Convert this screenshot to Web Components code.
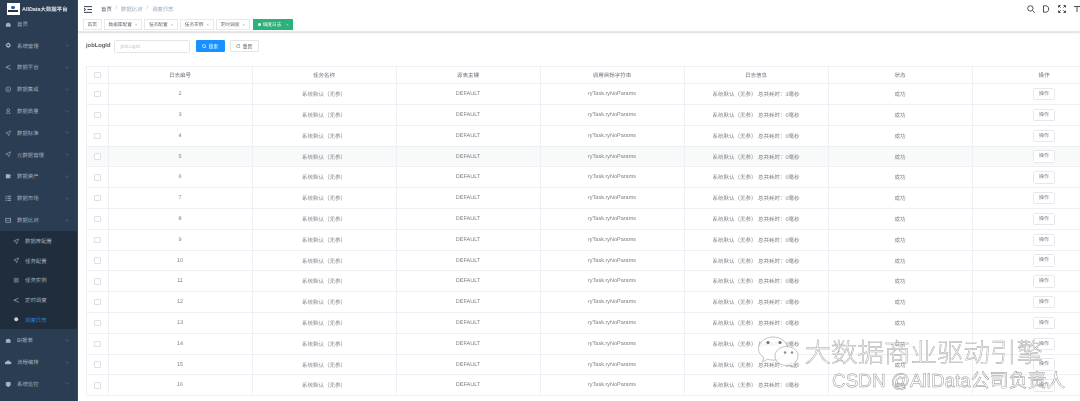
<!DOCTYPE html>
<html>
<head>
<meta charset="utf-8">
<style>
	html,body{margin:0; padding:0; width:1080px; height:401px; overflow:hidden; background:#fff;}
	body{font-family:"Liberation Sans","Noto Sans CJK SC",sans-serif; font-size:6px; color:#606266; text-rendering:geometricPrecision;}
	app-shell{filter:blur(.25px);}
</style>
</head>
<body>
<template id="shellTpl">
	<style>
		:host{display:flex; width:1080px; height:401px; overflow:hidden; position:relative;}
		main{flex:1; min-width:0; display:flex; flex-direction:column; overflow:hidden;}
	</style>
	<app-sidebar></app-sidebar>
	<main>
		<app-navbar></app-navbar>
		<tag-bar></tag-bar>
		<search-form></search-form>
		<log-table></log-table>
	</main>
	<water-mark></water-mark>
</template>

<template id="sidebarTpl">
	<style>
		:host{display:block; width:77.5px; flex:none; height:401px; background:#2b3d52; overflow:hidden; border-right:.5px solid #3a4b60; box-sizing:border-box;}
		.logo{position:relative; z-index:1; height:16px; display:flex; align-items:center; gap:2.5px; padding:1.5px 0 0 6.5px; box-sizing:border-box; margin-bottom:-3px;}
		.pic{width:13px; height:12.5px; background:#fff; display:flex; flex-direction:column; align-items:center; justify-content:center; gap:.4px;}
		.pic i{display:block; width:3.5px; height:3.5px; border-radius:50%; background:#2a5a9c;}
		.pic b{display:block; width:9.5px; height:1.7px; background:#27313e;}
		.name{color:#dfe4ea; font-size:5.4px; font-weight:600; white-space:nowrap;}
		.sub{background:#1f2d3d;}
	</style>
	<div class="logo"><div class="pic"><i></i><b></b></div><span class="name">AllData大数据平台</span></div>
	<side-item icon="dash" nochev>首页</side-item>
	<side-item icon="gear">系统管理</side-item>
	<side-item icon="tree">数据平台</side-item>
	<side-item icon="clock">数据集成</side-item>
	<side-item icon="user">数据质量</side-item>
	<side-item icon="send">数据标准</side-item>
	<side-item icon="send">元数据管理</side-item>
	<side-item icon="db">数据资产</side-item>
	<side-item icon="list">数据市场</side-item>
	<side-item icon="box" open>数据比对</side-item>
	<div class="sub">
		<sub-item icon="send">数据库配置</sub-item>
		<sub-item icon="send">任务配置</sub-item>
		<sub-item icon="grid">任务实例</sub-item>
		<sub-item icon="tree">定时调度</sub-item>
		<sub-item icon="dot" active>调度日志</sub-item>
	</div>
	<side-item icon="dash">BI报表</side-item>
	<side-item icon="cloud">流程编排</side-item>
	<side-item icon="shield">系统监控</side-item>
</template>

<template id="navbarTpl">
	<style>
		:host{display:flex; align-items:center; height:18.5px; flex:none; position:relative; color:#97a8be; font-size:5.4px;}
		.ham{margin-left:6px; width:8px; height:7px; flex:none;}
		nav{margin-left:9.5px; display:flex; gap:3.9px; white-space:nowrap;}
		nav b{font-weight:400; color:#4c5a6b;}
		nav s{text-decoration:none; color:#b5bfcb;}
		.tools{margin-left:auto; margin-right:-1px; display:flex; align-items:center; gap:7.5px; color:#5a5e66;}
		.tools svg{display:block; width:8px; height:8px;}
	</style>
	<svg class="ham" viewBox="0 0 8 7" fill="none" stroke="#3b4654" stroke-width="1"><path d="M0 .6h8M0 6.4h8M3.6 3.5H8M0 2l1.8 1.5L0 5z"/></svg>
	<nav><b>首页</b><s>/</s><span>数据比对</span><s>/</s><span>调度日志</span></nav>
	<div class="tools">
		<svg viewBox="0 0 8 8" fill="none" stroke="#4a4f57" stroke-width="1"><circle cx="3.4" cy="3.4" r="2.7"/><path d="M5.4 5.4 7.8 7.8"/></svg>
		<svg viewBox="0 0 8 8" fill="none" stroke="#4a4f57" stroke-width="1"><path d="M1.5 .8h2.2c2 0 3 1.4 3 3.2s-1 3.2-3 3.2H1.5z"/></svg>
		<svg viewBox="0 0 8 8" fill="none" stroke="#4a4f57" stroke-width="1"><path d="M.5 2.5V.5h2M5.5.5h2v2M7.5 5.500v2h-2M2.500 7.500h-2v-2M.8.8 2.600 2.600M7.200.8 5.400 2.600M7.200 7.200 5.400 5.400M.8 7.200 2.600 5.400"/></svg>
		<svg viewBox="0 0 8 8" fill="none" stroke="#4a4f57" stroke-width="1"><path d="M1 1.5h6M4 1.500V7"/></svg>
	</div>
</template>

<template id="tagbarTpl">
	<style>
		:host{display:flex; align-items:center; gap:2.2px; height:13px; flex:none; padding-left:5.3px; box-sizing:border-box; background:#fff; border-bottom:.5px solid #e4e7ec; box-shadow:0 1px 1.5px rgba(0,0,0,.14); position:relative; z-index:1;}
	</style>
	<tag-item>首页</tag-item>
	<tag-item closable>数据库配置</tag-item>
	<tag-item closable>任务配置</tag-item>
	<tag-item closable>任务实例</tag-item>
	<tag-item closable>定时调度</tag-item>
	<tag-item closable active>调度日志</tag-item>
</template>

<template id="formTpl">
	<style>
		:host{display:flex; align-items:center; height:13px; margin:8px 0 0 8.5px; flex:none; font-size:5.8px;}
		label{width:27.5px; font-weight:700; color:#5e6165; white-space:nowrap; flex:none;}
		.input{width:76px; height:13px; box-sizing:border-box; border:.5px solid #e3e5ea; border-radius:1.5px; color:#c0c4cc; font-size:5px; line-height:12px; padding-left:6px;}
		button{font:inherit; font-size:4.7px; height:11.5px; width:29px; box-sizing:border-box; border-radius:1px; border:.5px solid #e3e5ea; background:#fff; color:#606266; padding:0; display:flex; align-items:center; justify-content:center; gap:2.5px;}
		button svg{width:4.5px; height:4.5px;}
		.go{margin-left:6px; background:#1890ff; border-color:#1890ff; color:#fff;}
		.re{margin-left:5px;}
	</style>
	<label>jobLogId</label>
	<div class="input">jobLogId</div>
	<button class="go"><svg viewBox="0 0 6 6" fill="none" stroke="#fff" stroke-width=".8"><circle cx="2.7" cy="2.7" r="2.1"/><path d="M4.2 4.2 5.6 5.6"/></svg>搜索</button>
	<button class="re"><svg viewBox="0 0 6 6" fill="none" stroke="#606266" stroke-width=".7"><path d="M5.2 3A2.2 2.2 0 1 1 4.5 1.4M4.7.3v1.3H3.4"/></svg>重置</button>
</template>

<template id="tableTpl">
	<style>
		:host{display:block; margin:13.3px 0 0 8.5px; width:1029.5px; flex:none;}
		table{border-collapse:collapse; table-layout:fixed; width:1029.5px; font-size:5.5px; color:#7d8086;}
		th,td{border:1px solid #eef0f5; text-align:center; padding:0; font-weight:400; white-space:nowrap; overflow:hidden;}
		thead tr{height:17.5px;}
		th{color:#6f7277;}
		tbody tr{height:20.8px;}
		tbody tr.hover{background:#f8fafa;}
		i{display:block; width:6.5px; height:6.5px; margin:auto; box-sizing:border-box; border:.7px solid #dcdfe6; border-radius:1px; background:#fff;}
		.op{display:block; width:22.5px; height:12.5px; margin:auto; box-sizing:border-box; border:.7px solid #e6e8ed; border-radius:1.5px; line-height:11px; font-size:5px; color:#7d8086; background:#fff;}
	</style>
	<table>
		<colgroup><col style="width:21.5px"><col span="7" style="width:144px"></colgroup>
		<thead><tr>
			<th><i></i></th><th>日志编号</th><th>任务名称</th><th>源表主键</th><th>调用目标字符串</th><th>日志信息</th><th>状态</th><th>操作</th>
		</tr></thead>
		<tbody id="rows"></tbody>
	</table>
</template>

<template id="markTpl">
	<style>
		:host{display:block; position:absolute; left:758px; top:335px; width:322px; height:66px; pointer-events:none; font-family:"Noto Sans CJK SC","Liberation Sans",sans-serif;}
		svg{position:absolute; left:0; top:0; width:42px; height:38px;}
		.t1{position:absolute; left:46.5px; top:-2.5px; font-size:26.5px; line-height:36px; font-weight:300; color:rgba(255,255,255,.7); -webkit-text-stroke:.45px #a0a0a0; white-space:nowrap;}
		.t2{position:absolute; left:74px; top:33.5px; font-family:"Liberation Sans","Noto Sans CJK SC",sans-serif; font-size:18.9px; line-height:26px; color:rgba(255,255,255,.5); -webkit-text-stroke:.45px #8f8f8f; white-space:nowrap;}
	</style>
	<svg viewBox="0 0 42 38" fill="rgba(255,255,255,.82)" stroke="#b4b4b4" stroke-width=".8">
		<path d="M15 2C6.800 2 .5 7.200.5 13.500c0 3.700 2 6.800 5.200 8.900L4.500 27l5-2.700c1.700.5 3.500.8 5.500.8 8.200 0 14.500-5.200 14.500-11.600S23.200 2 15 2z"/>
		<path d="M40 21c0-5.300-5-9.500-11.500-9.500S17 15.700 17 21s5 9.500 11.500 9.500c1.400 0 2.700-.2 3.900-.5l4.600 2.400-1.200-3.900C38.200 26.700 40 24 40 21z"/>
		<circle cx="10" cy="7.500" r="1.500" fill="#6d6d6d" stroke="none"/><circle cx="22" cy="7.500" r="1.500" fill="#6d6d6d" stroke="none"/>
		<circle cx="27" cy="17.500" r="1.200" fill="#8a8a8a" stroke="none"/><circle cx="34" cy="17.500" r="1.200" fill="#8a8a8a" stroke="none"/>
	</svg>
	<div class="t1">大数据商业驱动引擎</div>
	<div class="t2">CSDN @AllData公司负责人</div>
</template>

<script>
	const ICONS = {
		dash:'<path d="M1 7V5a3 3 0 0 1 6 0v2z" fill="C"/>',
		gear:'<circle cx="4" cy="4" r="2" stroke="C" stroke-width="1.5" fill="none"/><path d="M4 .5v1M4 6.500v1M.5 4h1M6.500 4h1" stroke="C"/>',
		tree:'<path d="M1 4 6.500 1.500M1 4l3 1M4 5l3 1.500" stroke="C" stroke-width=".9" fill="none"/>',
		clock:'<circle cx="4" cy="4" r="3" stroke="C" stroke-width=".8" fill="none"/><path d="M2.500 4H5" stroke="C"/>',
		user:'<circle cx="4" cy="2.500" r="1.700" stroke="C" stroke-width=".8" fill="none"/><path d="M1 7.300h6M2 7c0-1.500.8-2.500 2-2.500S6 5.500 6 7" stroke="C" stroke-width=".7" fill="none"/>',
		send:'<path d="M7 1 1 3.500l2.500 1L4.500 7z" stroke="C" stroke-width=".7" fill="none"/>',
		db:'<path d="M1 1.500h5v5H1z" fill="C"/><path d="M6 3h1.500M6 5h1.500" stroke="C"/>',
		list:'<path d="M.5 1.500h1.500M.5 4h1.500M.5 6.500h1.500M3 1.500h4.500M3 4h4.500M3 6.500h4.500" stroke="C" stroke-width="1.1"/>',
		box:'<rect x="1" y="1.500" width="6" height="5" stroke="C" stroke-width=".8" fill="none"/><path d="M1 4h6" stroke="C" stroke-width=".6"/>',
		grid:'<path d="M1.500 1.500h2v2h-2zM4.500 1.500h2v2h-2zM1.500 4.500h2v2h-2zM4.500 4.500h2v2h-2z" stroke="C" stroke-width=".6" fill="none"/>',
		dot:'<circle cx="4" cy="4" r="2.400" fill="C"/>',
		cloud:'<path d="M1 6.500a1.500 1.500 0 0 1 .5-3 2.500 2.500 0 0 1 4.800 0 1.500 1.500 0 0 1 .2 3z" fill="C"/>',
		shield:'<path d="M1 1.500 4 .8l3 .7v2.500C7 5.800 5.500 7 4 7.500 2.500 7 1 5.800 1 4z" fill="C"/>'
	};
	function iconSvg(name, color){
		return `<svg viewBox="0 0 8 8" width="6.5" height="6.5" style="display:block;flex:none">${(ICONS[name]||'').replace(/"C"/g,`"${color}"`)}</svg>`;
	}
	// 템플릿 복사해서 shadow 붙이는 공통 클래스
	class TplElement extends HTMLElement{
		connectedCallback(){
			if(this.shadowRoot) return;
			this.attachShadow({mode:'open'});
			this.shadowRoot.append(document.getElementById(this.constructor.tpl).content.cloneNode(true));
			if(this.ready) this.ready();
		}
	}
	class AppShell extends TplElement{ static tpl='shellTpl'; }
	class AppSidebar extends TplElement{ static tpl='sidebarTpl'; }
	class AppNavbar extends TplElement{ static tpl='navbarTpl'; }
	class TagBar extends TplElement{ static tpl='tagbarTpl'; }
	class SearchForm extends TplElement{ static tpl='formTpl'; }
	class WaterMark extends TplElement{ static tpl='markTpl'; }
	class LogTable extends TplElement{
		static tpl='tableTpl';
		ready(){
			let html='';
			for(let i=2;i<=16;i++){
				html+=`<tr class="${i==5?'hover':''}"><td><i></i></td><td>${i}</td><td>系统默认（无参）</td><td>DEFAULT</td><td>ryTask.ryNoParams</td><td>系统默认（无参） 总共耗时：${i==2?3:0}毫秒</td><td>成功</td><td><span class="op">操作</span></td></tr>`;
			}
			this.shadowRoot.getElementById('rows').innerHTML=html;
		}
	}
	class SideItem extends HTMLElement{
		connectedCallback(){
			if(this.shadowRoot) return;
			this.attachShadow({mode:'open'});
			const open=this.hasAttribute('open');
			const chev=this.hasAttribute('nochev')?'':`<svg class="chev" viewBox="0 0 6 4" fill="none" stroke="#6d7d90" stroke-width=".7"><path d="${open?'M.8 3 3 1l2.200 2':'M.8 1 3 3l2.200-2'}"/></svg>`;
			this.shadowRoot.innerHTML=`<style>
				:host{display:flex; align-items:center; height:21.8px; padding-left:5px; gap:5.5px; font-size:5.4px; color:#a6b1bf;}
				.chev{width:4.5px; height:3px; margin-left:auto; margin-right:7.5px;}
			</style>${iconSvg(this.getAttribute('icon'),'#a6b1bf')}<span><slot></slot></span>${chev}`;
		}
	}
	class SubItem extends HTMLElement{
		connectedCallback(){
			if(this.shadowRoot) return;
			this.attachShadow({mode:'open'});
			const active=this.hasAttribute('active');
			this.shadowRoot.innerHTML=`<style>
				:host{display:flex; align-items:center; height:19.7px; padding-left:12.5px; gap:6px; font-size:5.4px; color:${active?'#2d83d6':'#a6b1bf'};}
			</style>${iconSvg(this.getAttribute('icon'),active?'#c8d0da':'#a6b1bf')}<span><slot></slot></span>`;
		}
	}
	class TagItem extends HTMLElement{
		connectedCallback(){
			if(this.shadowRoot) return;
			this.attachShadow({mode:'open'});
			const active=this.hasAttribute('active');
			const closable=this.hasAttribute('closable');
			this.shadowRoot.innerHTML=`<style>
				:host{display:inline-flex; align-items:center; height:11px; padding:0 3.7px; gap:${active?'1.8px':'0'}; margin-left:${active?'1.4px':'0'}; box-sizing:border-box; font-size:4.7px; white-space:nowrap; flex:none;
					border:.5px solid ${active?'#2bb27a':'#e6e9ee'}; background:${active?'#2bb27a':'#fff'}; color:${active?'#fff':'#5f6670'};}
				b{width:3px;height:3px;border-radius:50%;background:#fff;display:block;}
				u{text-decoration:none; font-size:4px; opacity:.7; margin-left:3px; width:2.5px;}
			</style>${active?'<b></b>':''}<slot></slot>${closable?'<u>×</u>':''}`;
		}
	}
	customElements.define('side-item',SideItem);
	customElements.define('sub-item',SubItem);
	customElements.define('tag-item',TagItem);
	customElements.define('app-sidebar',AppSidebar);
	customElements.define('app-navbar',AppNavbar);
	customElements.define('tag-bar',TagBar);
	customElements.define('search-form',SearchForm);
	customElements.define('log-table',LogTable);
	customElements.define('water-mark',WaterMark);
	customElements.define('app-shell',AppShell);
	document.body.append(document.createElement('app-shell'));
</script>
</body>
</html>
